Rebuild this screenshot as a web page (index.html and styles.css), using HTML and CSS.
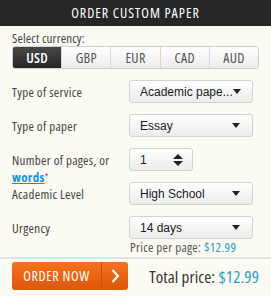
FILE: index.html
```html
<!DOCTYPE html>
<html lang="en">
<head>
    <meta charset="UTF-8">
    <title>Order custom paper</title>
    <link rel="stylesheet" href="styles.css">
</head>
<body>

<div class="calc">
    <div class="calc-title">ORDER CUSTOM PAPER</div>

    <div class="calc-body">
        <div class="cur-label">Select currency:</div>
        <div class="cur-group">
            <span class="cur active">USD</span>
            <span class="cur">GBP</span>
            <span class="cur">EUR</span>
            <span class="cur">CAD</span>
            <span class="cur">AUD</span>
        </div>

        <div class="row">
            <div class="row-label">Type of service</div>
            <div class="select"><span class="select-text">Academic pape...</span><span class="caret"></span></div>
        </div>
        <div class="row">
            <div class="row-label">Type of paper</div>
            <div class="select"><span class="select-text">Essay</span><span class="caret"></span></div>
        </div>
        <div class="row">
            <div class="row-label">Number of pages, or <a href="#" class="words">words</a><span class="req">*</span></div>
            <div class="number">
                <span class="select-text">1</span>
                <span class="spin"><span class="up"></span><span class="down"></span></span>
            </div>
        </div>
        <div class="row">
            <div class="row-label">Academic Level</div>
            <div class="select"><span class="select-text">High School</span><span class="caret"></span></div>
        </div>
        <div class="row">
            <div class="row-label">Urgency</div>
            <div class="select"><span class="select-text">14 days</span><span class="caret"></span></div>
        </div>
        <div class="per-page">Price per page: <span class="blue">$12.99</span></div>
    </div>

    <div class="calc-foot">
        <a href="#" class="order-btn">
            <span class="order-text">ORDER NOW</span>
            <span class="order-arrow">
                <svg width="10" height="16" viewBox="0 0 10 16"><path d="M2.5 2 L8 8 L2.5 14" fill="none" stroke="#fff" stroke-width="2"/></svg>
            </span>
        </a>
        <div class="total">Total price: <span class="blue">$12.99</span></div>
    </div>
</div>

</body>
</html>
```

FILE: styles.css
```css
body {
    margin: 0;
    background-color: #fbfaf3;
    font-family: "Open Sans", Lato, Arial, sans-serif;
    font-stretch: 75%;
    color: #333;
}
.calc {
    width: 271px;
}
.calc-title {
    height: 26px;
    line-height: 26px;
    background: #262626;
    color: #fff;
    text-align: center;
    font-size: 14px;
    letter-spacing: 1px;
}
.calc-body {
    padding: 4px 12px 0 12px;
}
.cur-label {
    font-size: 13px;
    line-height: 16px;
    letter-spacing: 0.15px;
    color: #444;
}
.cur-group {
    display: flex;
    height: 21px;
    width: 245px;
    border: 1px solid #cfcfcf;
    border-radius: 3px;
    overflow: hidden;
}
.cur {
    flex: 1;
    text-align: center;
    line-height: 21px;
    font-size: 14px;
    letter-spacing: 0.3px;
    color: #555;
    background: linear-gradient(#ffffff, #ececec);
    border-left: 1px solid #d6d6d6;
}
.cur:first-child {
    border-left: none;
}
.cur.active {
    background: linear-gradient(#474747, #262626);
    color: #fff;
    font-weight: 600;
}
.row {
    display: flex;
    align-items: flex-start;
    height: 23px;
    margin-top: 11px;
}
.row-label {
    width: 117px;
    flex-shrink: 0;
    padding-top: 4px;
    font-size: 13px;
    line-height: 17px;
    letter-spacing: 0.3px;
    color: #444;
}
.words {
    color: #1a8fd6;
    font-weight: 700;
    text-decoration: underline;
}
.req {
    color: #e33;
    font-size: 10px;
    vertical-align: top;
}
.select, .number {
    display: flex;
    align-items: center;
    box-sizing: border-box;
    height: 23px;
    width: 124px;
    padding: 0 12px 0 10px;
    border: 1px solid #d2d2d2;
    border-radius: 3px;
    background: linear-gradient(#ffffff, #ececec);
    font-family: "Liberation Sans", Arial, sans-serif;
    font-stretch: normal;
    letter-spacing: 0;
    font-size: 12px;
    color: #222;
}
.number {
    width: 64px;
    padding-right: 9px;
}
.select-text {
    flex: 1;
    white-space: nowrap;
}
.caret {
    width: 0;
    height: 0;
    border-left: 4px solid transparent;
    border-right: 4px solid transparent;
    border-top: 5px solid #222;
}
.spin {
    display: flex;
    flex-direction: column;
    gap: 2px;
}
.up {
    width: 0;
    height: 0;
    border-left: 5px solid transparent;
    border-right: 5px solid transparent;
    border-bottom: 5px solid #222;
}
.down {
    width: 0;
    height: 0;
    border-left: 5px solid transparent;
    border-right: 5px solid transparent;
    border-top: 5px solid #222;
}
.per-page {
    margin-left: 118px;
    margin-top: 1px;
    font-size: 13px;
    line-height: 15px;
    letter-spacing: 0.3px;
    color: #555;
}
.blue {
    color: #2a9fc9;
}
.calc-foot {
    display: flex;
    align-items: center;
    margin-top: 2px;
    border-top: 2px solid #e2e2e2;
    padding: 3px 12px 0 12px;
}
.order-btn {
    display: flex;
    flex-shrink: 0;
    height: 28px;
    width: 116px;
    border-radius: 3px;
    background: linear-gradient(#f4731c, #de560a);
    color: #fff;
    text-decoration: none;
    font-size: 14px;
    letter-spacing: 0.6px;
}
.order-text {
    width: 89px;
    text-align: center;
    line-height: 28px;
    border-right: 1px solid #c94f0a;
}
.order-arrow {
    flex: 1;
    display: flex;
    align-items: center;
    justify-content: center;
}
.total {
    margin-left: auto;
    white-space: nowrap;
    font-size: 17px;
    letter-spacing: 0.1px;
    color: #333;
}
```
